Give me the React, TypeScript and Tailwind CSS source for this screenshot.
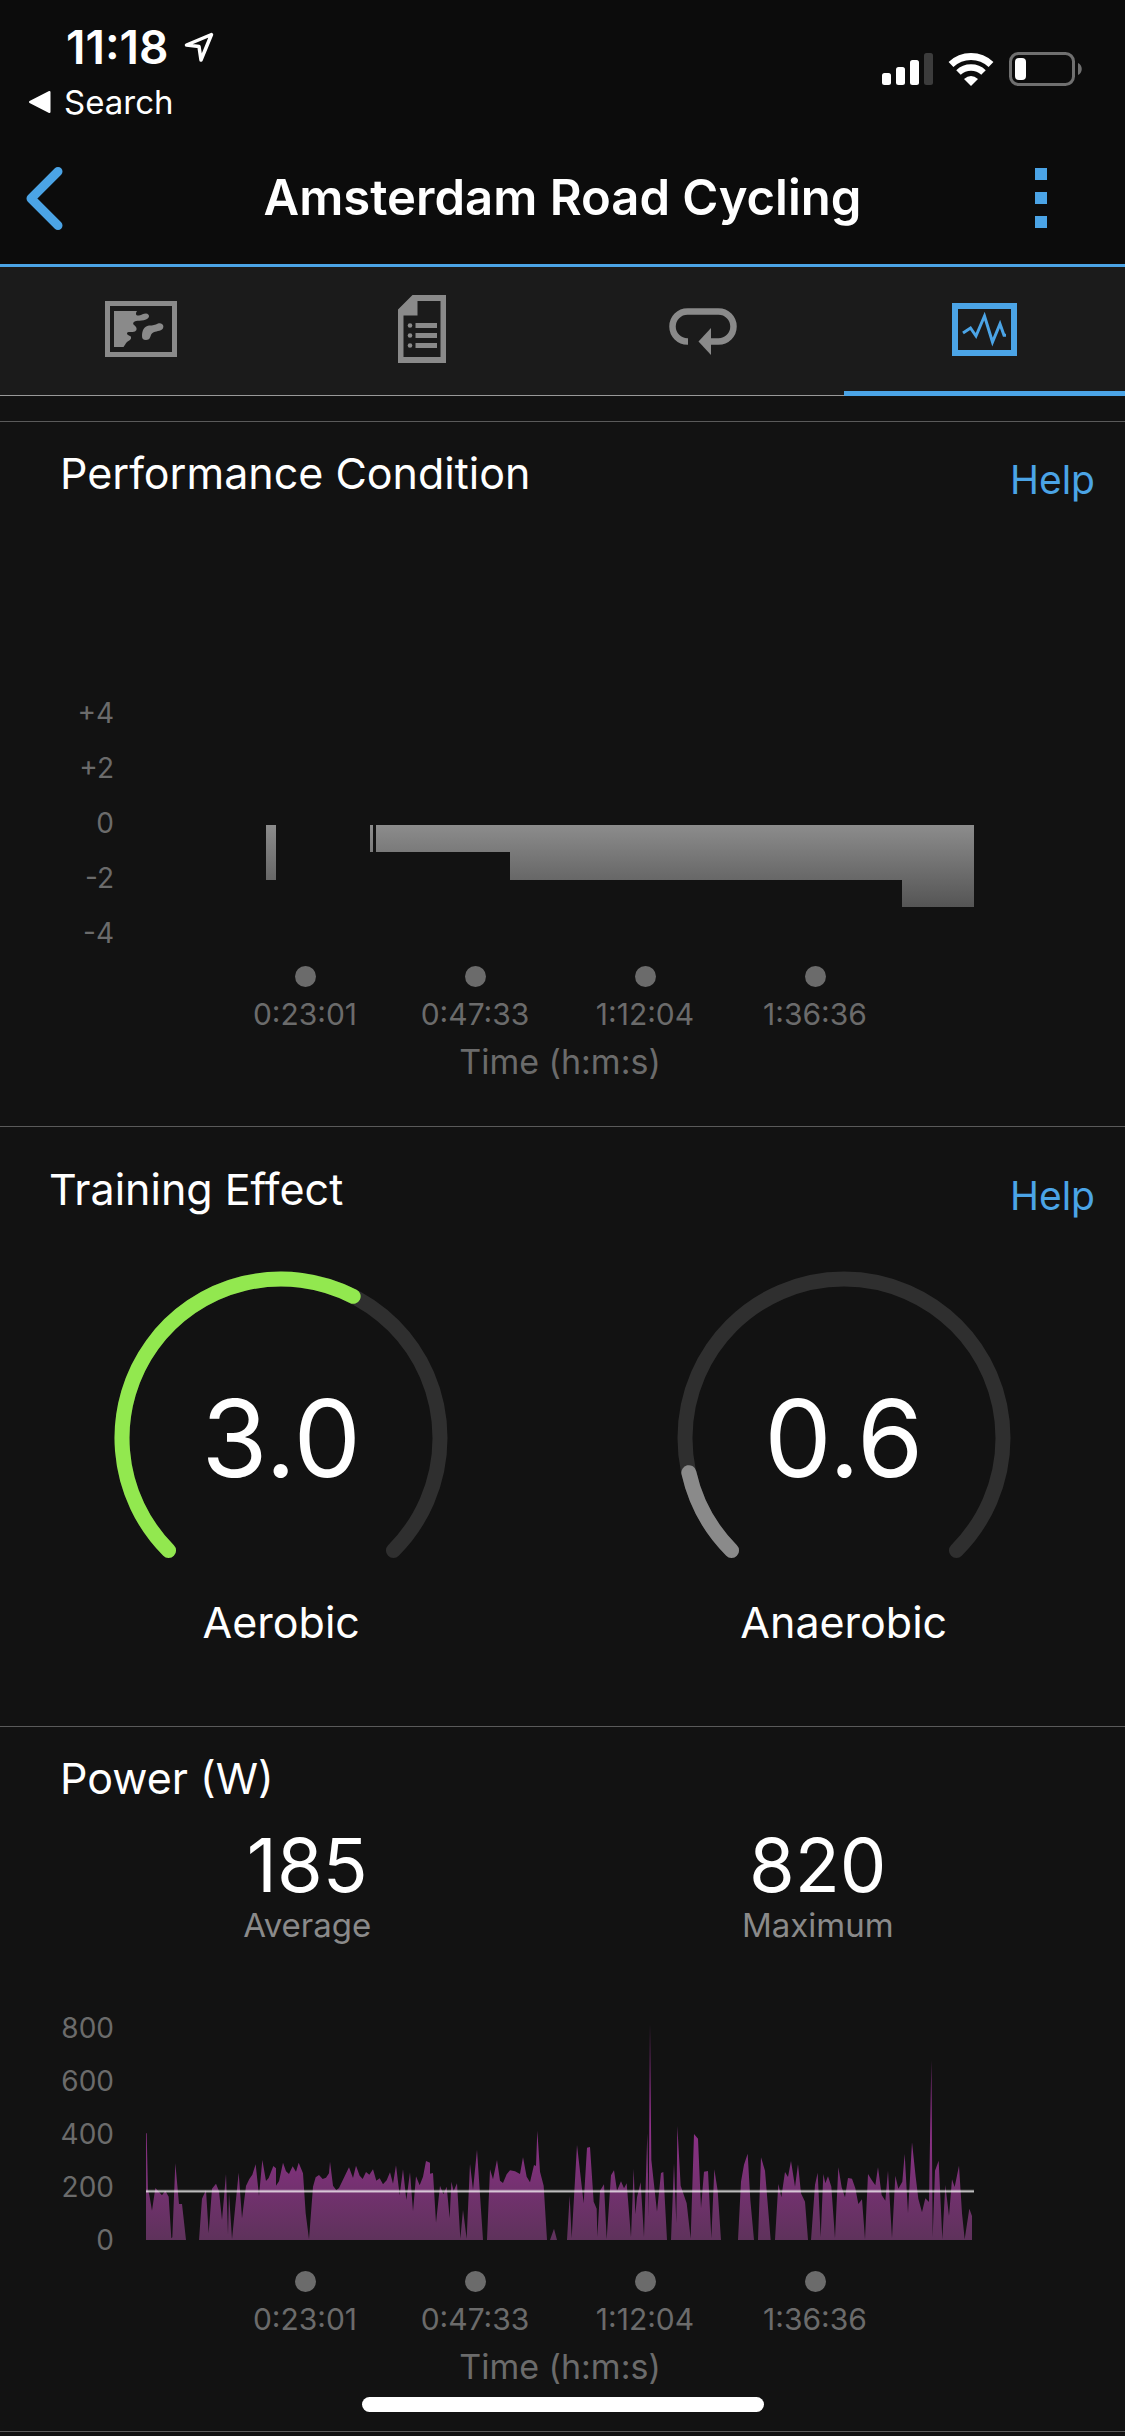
import type { ReactNode } from "react";

const timeTicks = ["0:23:01", "0:47:33", "1:12:04", "1:36:36"];

// x / y samples of the power trace, baseline at y = 720
const powerTrace = `48,720 48,400 50,400 54,570 58,585 66,632 76,564 96,586 106,572 116,590 124,715 127,712 136,490
147,612 156,612 168,720 207,720 216,596 228,570 236,700 246,566 258,551 267,574 276,660 288,522 294,705 297,580
306,718 326,518 336,655 348,558 358,537 367,524 377,493 387,588 397,480 408,543 416,534 430,498 438,505 438,557
447,544 459,488 468,514 477,522 488,499 498,515 506,488 519,520 527,640 537,718 549,560 557,532 567,525 578,537
588,533 597,520 600,485 609,557 619,571 627,564 657,502 669,534 678,497 689,527 698,537 708,516 718,524 729,508
739,542 749,535 759,553 770,541 780,517 789,551 798,496 809,586 819,508 829,600 840,517 849,634 858,529 869,556
879,530 888,483 900,488 900,521 909,519 918,668 930,557 940,583 950,560 959,655 964,545 971,573 981,550 991,716
999,630 1010,716 1020,491 1029,570 1041,449 1059,720 1071,720 1080,508 1089,538 1101,480 1110,542 1119,549
1130,523 1140,511 1155,514 1170,522 1179,472 1190,530 1200,547 1212,495 1218,498 1222,392 1230,515 1241,557
1251,720 1260,720 1272,686 1281,720 1311,720 1319,588 1325,715 1341,435 1361,610 1371,443 1380,441 1391,605
1400,626 1402,710 1410,572 1422,553 1430,718 1443,526 1452,511 1461,572 1473,544 1482,565 1490,550 1503,712
1511,506 1516,643 1521,592 1532,547 1542,712 1552,400 1556,650 1560,72 1564,480 1581,635 1593,519 1600,516
1611,720 1623,720 1632,490 1639,670 1642,378 1652,557 1670,610 1682,716 1692,402 1704,416 1713,625 1722,515
1734,513 1744,715 1753,508 1763,572 1773,720 1824,720 1833,545 1842,494 1853,461 1861,600 1872,720 1884,720
1893,472 1905,512 1922,720 1935,720 1945,552 1954,592 1965,516 1974,531 1983,483 1995,560 2004,493 2013,580
2025,605 2034,720 2043,720 2055,555 2063,518 2072,712 2080,522 2086,550 2094,529 2104,560 2115,715 2125,502
2135,562 2145,592 2154,534 2166,536 2176,565 2185,612 2196,598 2205,718 2214,522 2225,540 2236,556 2244,502
2255,585 2266,602 2274,512 2286,715 2296,527 2305,566 2317,545 2324,462 2334,640 2346,427 2357,530 2365,596
2376,637 2386,595 2397,606 2404,180 2408,712 2415,512 2426,482 2437,718 2446,555 2457,648 2466,538 2474,561
2487,497 2496,640 2504,718 2518,626 2526,648 2526,720`;

const MapIcon = () => (
  <svg width="72" height="56" viewBox="0 0 72 56" aria-hidden="true">
    <rect x="2.5" y="2.5" width="67" height="51" fill="none" stroke="currentColor" strokeWidth="5" />
    <path
      fill="currentColor"
      d="M9 10H32C30 13 31 15 34 14.5C37 14 38 12.5 41 12.5C45 13 45 17 41 18.5C38 20 35 19.5 32.5 19.7C29 20 27 22 29 24C32 26 32.5 29 30 30.5C27 31.5 22 30 22 32.5C22 35 27 34 26 37.5C25 40 22 40 20.5 43L18.5 46H9Z"
    />
    <path fill="currentColor" d="M37 35C37 30 39 25 44 24.5C48 24.5 50 24 53 22.5C58 21 60 26 57 28.5C54 30.5 49 30 46.5 33C45 36 45 39 41 39C38 39 37 37.5 37 35Z" />
  </svg>
);

const DetailsIcon = () => (
  <svg width="48" height="68" viewBox="0 0 48 68" aria-hidden="true">
    <path fill="currentColor" fillRule="evenodd" d="M0 14.5L14.5 0H48V68H0ZM19.5 6V20.5H5.5V62H42.5V6Z" />
    <g fill="currentColor">
      <circle cx="12" cy="30.5" r="2.3" />
      <circle cx="12" cy="40.5" r="2.3" />
      <circle cx="12" cy="50.5" r="2.3" />
      <path d="M17.5 28H39V33H17.5ZM17.5 38H39V43H17.5ZM17.5 48H39V53H17.5Z" />
    </g>
  </svg>
);

const LapsIcon = () => (
  <svg width="68" height="47" viewBox="0 0 68 47" className="mt-1.5" aria-hidden="true">
    <path d="M19 33.5H18.5A15 15 0 0 1 18.5 3.5H49.5A15 15 0 0 1 49.5 33.5H40" fill="none" stroke="currentColor" strokeWidth="6.5" />
    <path d="M29.5 33.5L42 20V47Z" fill="currentColor" />
  </svg>
);

const ChartsIcon = () => (
  <svg width="65" height="53" viewBox="0 0 65 53" aria-hidden="true">
    <rect x="3" y="3" width="59" height="47" fill="none" stroke="currentColor" strokeWidth="6" />
    <path d="M11 30L18.5 25L24 33L32.5 13L40.5 39L48 21L52 32.3H54" fill="none" stroke="currentColor" strokeWidth="3" />
  </svg>
);

const tabs = [
  { name: "Map", icon: <MapIcon /> },
  { name: "Details", icon: <DetailsIcon /> },
  { name: "Laps", icon: <LapsIcon /> },
  { name: "Charts", icon: <ChartsIcon /> },
];

const StatusBar = () => (
  <div className="flex h-[132px] justify-between pr-[42px] pl-[28px] text-white">
    <div className="pt-[27px]">
      <div className="flex items-center gap-4 pl-[38px] leading-10">
        <span className="text-[46px] font-semibold">11:18</span>
        <svg width="30" height="31" viewBox="0 0 30 31" aria-hidden="true">
          <path d="M27.5 2.5L2.5 13L15 14.5L17 28Z" fill="none" stroke="white" strokeWidth="3.5" strokeLinejoin="round" />
        </svg>
      </div>
      <a href="#search" className="mt-[15px] flex items-center gap-[13px] text-[33px] leading-10">
        <svg width="23" height="24" viewBox="0 0 23 24" aria-hidden="true">
          <path d="M2 12L21.5 2V22Z" fill="white" stroke="white" strokeWidth="2" strokeLinejoin="round" />
        </svg>
        Search
      </a>
    </div>
    <div className="mt-1.5 flex items-center gap-[15px]">
      <svg width="51" height="34" viewBox="0 0 51 34" fill="white" aria-hidden="true">
        <rect x="0" y="21" width="9" height="12" rx="2.5" />
        <rect x="14" y="15" width="9" height="18" rx="2.5" />
        <rect x="28" y="8" width="9" height="25" rx="2.5" />
        <rect x="42" y="1" width="9" height="32" rx="2.5" fill="#3c3c3c" />
      </svg>
      <svg width="46" height="34" viewBox="0 0 46 34" fill="none" stroke="white" aria-hidden="true">
        <path d="M3 12.5A29 29 0 0 1 43 12.5" strokeWidth="7" />
        <path d="M10.5 20.5A18 18 0 0 1 35.5 20.5" strokeWidth="6.5" />
        <path d="M16 27Q23 21 30 27L23 34Z" fill="white" stroke="none" />
      </svg>
      <svg width="74" height="34" viewBox="0 0 74 34" aria-hidden="true">
        <rect x="1.5" y="1.5" width="63" height="31" rx="8" fill="none" stroke="#707070" strokeWidth="3" />
        <rect x="6" y="6" width="11" height="22" rx="4" fill="white" />
        <path d="M69 11C74 13 74 21 69 23Z" fill="#707070" />
      </svg>
    </div>
  </div>
);

const NavBar = () => (
  <div className="grid h-[132px] grid-cols-[100px_1fr_100px] items-center px-[20px]">
    <button type="button" aria-label="Back" className="w-[70px] text-[#4ba4e6]">
      <svg width="50" height="70" viewBox="0 0 50 70" aria-hidden="true">
        <path d="M38 8.5L11 35.5L38 62.5" fill="none" stroke="currentColor" strokeWidth="9" strokeLinecap="round" strokeLinejoin="round" />
      </svg>
    </button>
    <h1 className="text-center text-[49px] leading-[64px] font-semibold text-white">Amsterdam Road Cycling</h1>
    <button type="button" aria-label="More options" className="flex w-[72px] flex-col items-center gap-3">
      <span className="size-3 bg-[#4ba4e6]" />
      <span className="size-3 bg-[#4ba4e6]" />
      <span className="size-3 bg-[#4ba4e6]" />
    </button>
  </div>
);

const TabBar = () => (
  <nav className="grid h-[129px] grid-cols-4 bg-[#1b1b1b]">
    {tabs.map((tab) => {
      const active = tab.name === "Charts";
      return (
        <button
          key={tab.name}
          type="button"
          aria-label={tab.name}
          className={
            active
              ? "flex items-center justify-center border-b-5 border-[#4ba4e6] text-[#4ba4e6]"
              : "flex items-center justify-center border-b border-[#999999] pb-[5px] text-[#8a8a8a]"
          }
        >
          {tab.icon}
        </button>
      );
    })}
  </nav>
);

const HelpLink = () => (
  <a href="#help" className="mt-[7px] text-[39px] leading-[52px] text-[#4ba4e6]">
    Help
  </a>
);

type ChartProps = {
  labels: string[];
  children: ReactNode;
};

const TimeChart = ({ labels, children }: ChartProps) => (
  <div className="grid grid-cols-[114px_1fr] gap-x-8 pr-[151px] pb-[42px] text-[#6b6b6b]">
    <div className="flex flex-col text-right text-[28px]">
      {labels.map((label) => (
        <span key={label} className="flex flex-1 items-center justify-end leading-9">
          {label}
        </span>
      ))}
    </div>
    {children}
    <div className="col-start-2 mt-[5px] px-[74px]">
      <div className="grid grid-cols-4">
        {timeTicks.map((tick) => (
          <div key={tick} className="flex flex-col items-center gap-[9px]">
            <span className="size-[21px] rounded-full bg-[#6b6b6b]" />
            <span className="text-[30px] leading-9">{tick}</span>
          </div>
        ))}
      </div>
      <p className="mt-2 text-center text-[34px] leading-[44px]">Time (h:m:s)</p>
    </div>
  </div>
);

type GaugeProps = {
  value: number;
  label: string;
  color: string;
};

const RADIUS = 159;

// the dial runs 270 degrees, from bottom left to bottom right, on a scale of 0 to 5
const arcTo = (value: number) => {
  const sweep = (value / 5) * 270;
  const end = ((sweep - 135) * Math.PI) / 180;
  const start = (-135 * Math.PI) / 180;
  const x1 = 167 + RADIUS * Math.sin(start);
  const y1 = 167 - RADIUS * Math.cos(start);
  const x2 = 167 + RADIUS * Math.sin(end);
  const y2 = 167 - RADIUS * Math.cos(end);
  return `M${x1} ${y1}A${RADIUS} ${RADIUS} 0 ${sweep > 180 ? 1 : 0} 1 ${x2} ${y2}`;
};

const Gauge = ({ value, label, color }: GaugeProps) => (
  <div className="flex flex-col items-center text-white">
    <div className="relative">
      <svg width="334" height="290" viewBox="0 0 334 290" fill="none" strokeWidth="15" strokeLinecap="round" aria-hidden="true">
        <path d={arcTo(5)} stroke="#2f2f2f" />
        <path d={arcTo(value)} stroke={color} />
      </svg>
      <span className="absolute inset-x-0 top-0 text-center text-[107px] leading-[334px]">{value.toFixed(1)}</span>
    </div>
    <p className="mt-[35px] text-[43px] leading-[52px]">{label}</p>
  </div>
);

const Stat = ({ value, label }: { value: number; label: string }) => (
  <div className="text-center">
    <p className="text-[74px] leading-[80px] text-white">{value}</p>
    <p className="text-[33px] leading-10 text-[#8a8a8a]">{label}</p>
  </div>
);

const App = () => {
  return (
    <div className="min-h-screen bg-[#121212] font-['Inter',sans-serif]">
      <header className="border-b-3 border-[#4ba4e6] bg-[#0c0c0c]">
        <StatusBar />
        <NavBar />
      </header>
      <TabBar />

      <main className="pt-[25px]">
        <section className="border-t border-[#5a5a5a]">
          <div className="flex justify-between pt-[25px] pr-[30px] pl-[60px]">
            <h2 className="text-[43px] leading-[52px] text-white">Performance Condition</h2>
            <HelpLink />
          </div>
          <div className="mt-[179px]">
            <TimeChart labels={["+4", "+2", "0", "-2", "-4"]}>
              <svg className="h-[276px] w-full" viewBox="0 0 828 276" preserveAspectRatio="none" aria-hidden="true">
                <defs>
                  <linearGradient id="condition" gradientUnits="userSpaceOnUse" x1="0" y1="140" x2="0" y2="222">
                    <stop offset="0" stopColor="#8c8c8c" />
                    <stop offset="1" stopColor="#555555" />
                  </linearGradient>
                </defs>
                <path
                  fill="url(#condition)"
                  d="M120 140H130V195H120ZM224 140H227V167H224ZM230 140H828V222H756V195H364V167H230Z"
                />
              </svg>
            </TimeChart>
          </div>
        </section>

        <section className="border-t border-[#5a5a5a] pb-[78px]">
          <div className="flex justify-between pt-[36px] pr-[30px] pl-[49px]">
            <h2 className="text-[43px] leading-[52px] text-white">Training Effect</h2>
            <HelpLink />
          </div>
          <div className="mt-[49px] grid grid-cols-2">
            <Gauge value={3.0} label="Aerobic" color="#92e84f" />
            <Gauge value={0.6} label="Anaerobic" color="#8a8a8a" />
          </div>
        </section>

        <section className="border-y border-[#5a5a5a]">
          <h2 className="pt-[25px] pl-[60px] text-[43px] leading-[52px] text-white">Power (W)</h2>
          <div className="mt-[21px] grid grid-cols-2 px-[52px]">
            <Stat value={185} label="Average" />
            <Stat value={820} label="Maximum" />
          </div>
          <div className="mt-[57px]">
            <TimeChart labels={["800", "600", "400", "200", "0"]}>
              <svg className="h-[264px] w-full" viewBox="48 6 2484 792" preserveAspectRatio="none" aria-hidden="true">
                <defs>
                  <linearGradient id="power" gradientUnits="userSpaceOnUse" x1="0" y1="380" x2="0" y2="720">
                    <stop offset="0" stopColor="#8e3089" />
                    <stop offset="1" stopColor="#5e325b" />
                  </linearGradient>
                </defs>
                <polygon fill="url(#power)" points={powerTrace} />
                <path d="M48 574H2532" stroke="white" strokeOpacity="0.45" strokeWidth="9" />
                <path d="M48 574H2532" stroke="white" strokeOpacity="0.6" strokeWidth="3" />
              </svg>
            </TimeChart>
          </div>
        </section>
      </main>

      {/* home indicator */}
      <div className="fixed inset-x-0 bottom-6 flex justify-center">
        <div className="h-[15px] w-[402px] rounded-full bg-white" />
      </div>
    </div>
  );
};

export default App;
